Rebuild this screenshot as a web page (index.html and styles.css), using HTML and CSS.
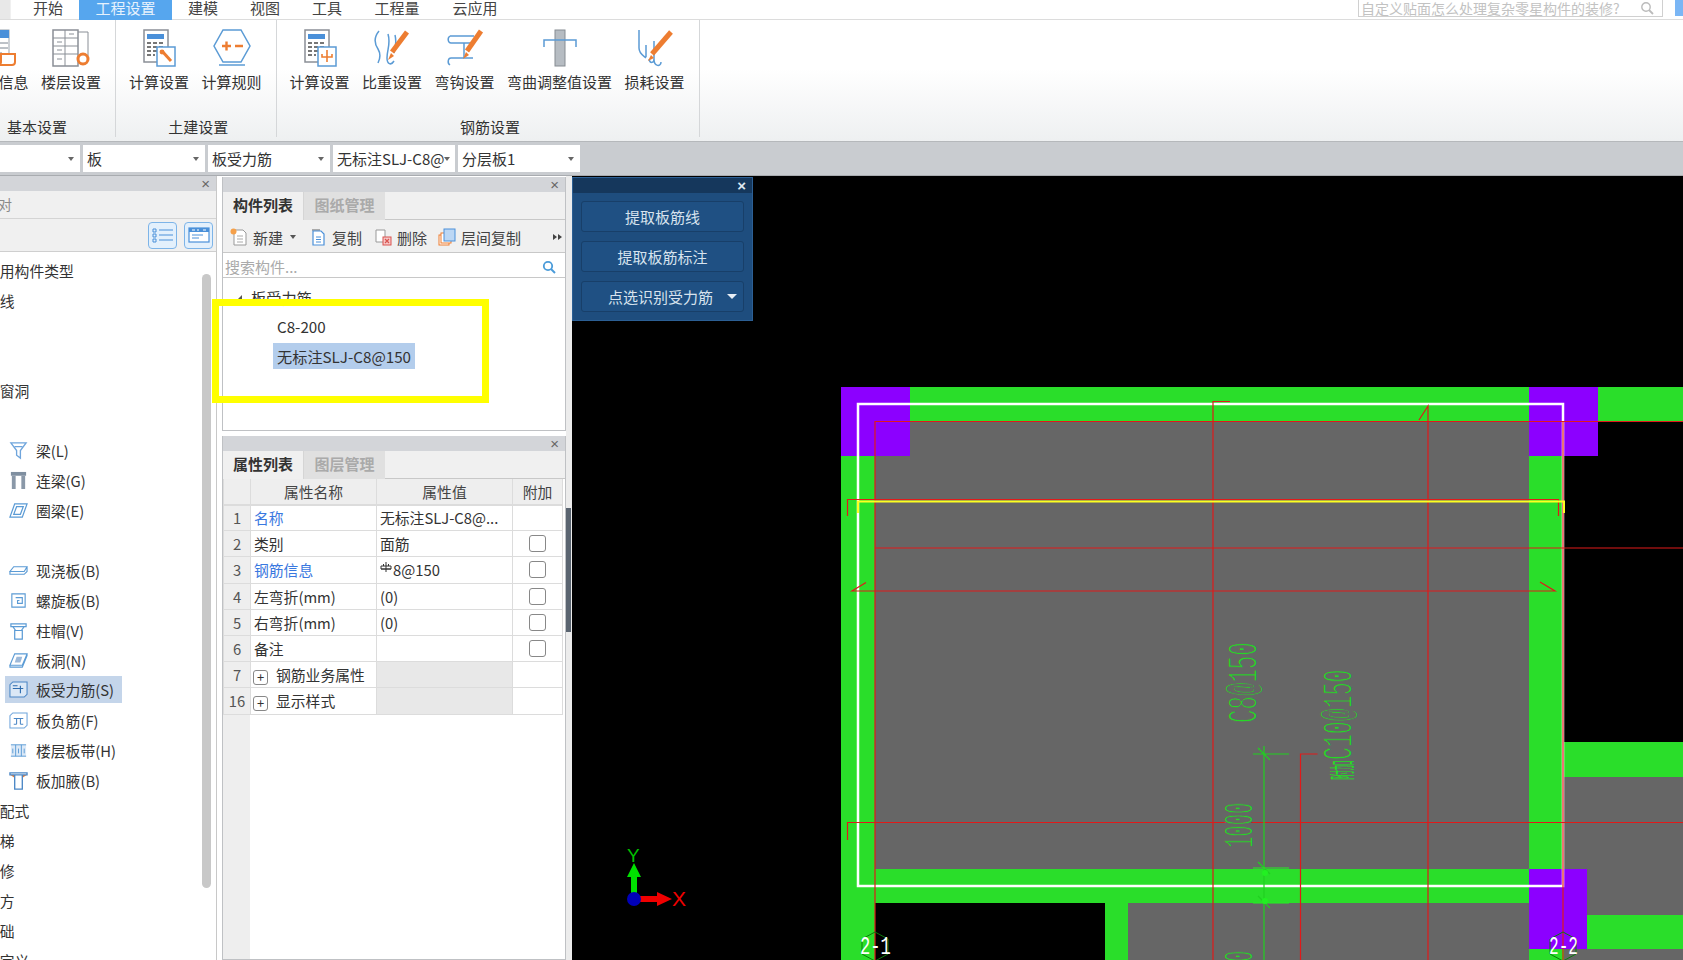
FILE: index.html
```html
<!DOCTYPE html>
<html lang="zh-CN">
<head>
  <meta charset="UTF-8">
  <title>工程设置</title>
  <link rel="stylesheet" href="styles.css">
</head>
<body>
<div class="app">

  <!-- Tabs -->
  <div class="tabbar">
    <div class="app-btn"></div>
    <div class="tab w62">开始</div>
    <div class="tab w93 active">工程设置</div>
    <div class="tab w62">建模</div>
    <div class="tab w62">视图</div>
    <div class="tab w62">工具</div>
    <div class="tab w78">工程量</div>
    <div class="tab w78">云应用</div>
    <div class="top-search">
      <span>自定义贴面怎么处理复杂零星构件的装修?</span>
      <svg class="ico14" viewBox="0 0 14 14"><circle cx="6" cy="6" r="4.2" fill="none" stroke="#bbb" stroke-width="1.4"/><path d="M9 9l4 4" stroke="#bbb" stroke-width="1.8"/></svg>
    </div>
    <div class="top-end"></div>
  </div>

  <!-- Ribbon -->
  <div class="ribbon">
    <div class="rb-group first">
      <div class="rb-items">
        <div class="rb-item">
          <svg class="rb-icon" viewBox="0 0 38 38"><rect x="4" y="1" width="26" height="33" fill="#fff" stroke="#9aa3ad"/><rect x="4" y="1" width="26" height="8" fill="#4a90d9"/><path d="M9 14h20M9 19h20M9 24h14" stroke="#7a8490"/><path d="M22 25h14v8a3 3 0 0 1-3 3H20a3 3 0 0 0 2-3z" fill="#fff" stroke="#ed7d31" stroke-width="2"/></svg>
          <span>工程信息</span>
        </div>
        <div class="rb-item">
          <svg class="rb-icon" viewBox="0 0 38 38"><rect x="1" y="1" width="25" height="36" fill="#fff" stroke="#8a8f96" stroke-width="1.5"/><path d="M1 9h25M1 17h25M1 25h25M13 1v36M26 3h10v24" fill="none" stroke="#8a8f96"/><path d="M17 5h5M5 13h5M5 21h5M5 30h5" stroke="#8a8f96"/><circle cx="31" cy="30" r="5" fill="#fff" stroke="#ed7d31" stroke-width="3"/></svg>
          <span>楼层设置</span>
        </div>
      </div>
      <div class="rb-title">基本设置</div>
    </div>
    <div class="rb-group">
      <div class="rb-items">
        <div class="rb-item">
          <svg class="rb-icon" viewBox="0 0 38 38"><rect x="4" y="1" width="24" height="32" fill="#fff" stroke="#8a8f96" stroke-width="1.5"/><rect x="7" y="5" width="17" height="5" fill="#4a90d9"/><path d="M7 14h17M7 18h17M7 22h10M7 26h8" stroke="#777" stroke-width="2" stroke-dasharray="4 2"/><rect x="17" y="18" width="18" height="19" fill="#fff" stroke="#5b9bd5" stroke-width="1.5"/><path d="M22 22l9 10" stroke="#ed7d31" stroke-width="3"/><circle cx="22" cy="23" r="2.4" fill="#ed7d31"/></svg>
          <span>计算设置</span>
        </div>
        <div class="rb-item">
          <svg class="rb-icon" viewBox="0 0 38 38"><path d="M10 1h18l9 16-9 16H10L1 17z" fill="#fff" stroke="#5b9bd5" stroke-width="1.5"/><path d="M6 36h26" stroke="#5b9bd5" stroke-width="1.5"/><path d="M9 17h9M13.500 12.500v9M22 17h8" stroke="#ed7d31" stroke-width="2.4"/></svg>
          <span>计算规则</span>
        </div>
      </div>
      <div class="rb-title">土建设置</div>
    </div>
    <div class="rb-group">
      <div class="rb-items">
        <div class="rb-item">
          <svg class="rb-icon" viewBox="0 0 38 38"><rect x="4" y="1" width="24" height="32" fill="#fff" stroke="#8a8f96" stroke-width="1.5"/><rect x="7" y="5" width="17" height="5" fill="#4a90d9"/><path d="M7 14h17M7 18h17M7 22h10M7 26h8" stroke="#777" stroke-width="2" stroke-dasharray="4 2"/><rect x="17" y="18" width="18" height="19" fill="#fff" stroke="#5b9bd5" stroke-width="1.5"/><path d="M26 21v12M21 25v3h10v-3" fill="none" stroke="#ed7d31" stroke-width="1.6"/></svg>
          <span>计算设置</span>
        </div>
        <div class="rb-item">
          <svg class="rb-icon" viewBox="0 0 38 38"><path d="M6 2C1 8 1 14 5 20c3 5 2 10 0 14M15 5c3 10-1 15-1 24 0 6 4 8 7 3M22 6c2 8 0 14-1 18" fill="none" stroke="#5b9bd5" stroke-width="1.5"/><path d="M34 3l-15 20" stroke="#ed7d31" stroke-width="5"/><path d="M18 24l-3 7 6-4z" fill="#ed7d31"/></svg>
          <span>比重设置</span>
        </div>
        <div class="rb-item">
          <svg class="rb-icon" viewBox="0 0 38 38"><path d="M4 7c-3 2-2 7 1 7h22M4 36c-3-2-2-7 1-7h22M4 7h8M18 14v15M13 14h10M13 29h10M4 7h24" fill="none" stroke="#5b9bd5" stroke-width="1.5"/><path d="M35 2l-14 20" stroke="#ed7d31" stroke-width="5"/><path d="M20 23l-3 7 6-4z" fill="#ed7d31"/></svg>
          <span>弯钩设置</span>
        </div>
        <div class="rb-item">
          <svg class="rb-icon" viewBox="0 0 38 38"><rect x="14" y="1" width="10" height="36" fill="#b6bcc2" stroke="#868c92"/><path d="M3 18v-7h32v7" fill="none" stroke="#5b9bd5" stroke-width="1.5"/></svg>
          <span>弯曲调整值设置</span>
        </div>
        <div class="rb-item">
          <svg class="rb-icon" viewBox="0 0 38 38"><path d="M3 1v18c0 6 5 8 7 10M10 16v12M18 12v18c0 8 7 8 7 3M13 30c1 5 5 4 5 0" fill="none" stroke="#5b9bd5" stroke-width="1.5"/><path d="M35 3L16 25" stroke="#ed7d31" stroke-width="5"/><path d="M15 26l-3 6 6-3z" fill="#ed7d31"/></svg>
          <span>损耗设置</span>
        </div>
      </div>
      <div class="rb-title">钢筋设置</div>
    </div>
  </div>

  <!-- Combo boxes -->
  <div class="selectbar">
    <div class="combo c0"><span></span><i></i></div>
    <div class="combo c1"><span>板</span><i></i></div>
    <div class="combo c1"><span>板受力筋</span><i></i></div>
    <div class="combo c1"><span>无标注SLJ-C8@</span><i></i></div>
    <div class="combo c1"><span>分层板1</span><i></i></div>
  </div>

  <div class="workspace">

    <!-- Left navigation -->
    <div class="nav-panel">
      <div class="pane-head"><span class="close">×</span></div>
      <div class="nav-title">对</div>
      <div class="nav-tools">
        <div class="view-btn"><svg viewBox="0 0 22 16"><path d="M1 2h3v3H1zM1 7h3v3H1zM1 12h3v3H1z" fill="none" stroke="#4a90d9"/><path d="M7 3h14M7 8h14M7 13h14" stroke="#4a90d9"/></svg></div>
        <div class="view-btn"><svg viewBox="0 0 22 16"><rect x="1" y="1" width="20" height="14" fill="#fff" stroke="#4a90d9" stroke-width="1.2"/><rect x="1" y="1" width="20" height="4" fill="#4a90d9"/><path d="M4 3h3M9 3h2M15 3h3" stroke="#fff"/><path d="M4 8h11M4 11h7" stroke="#4a90d9"/></svg></div>
      </div>
      <div class="nav-list">
        <div class="nav-group">常用构件类型</div>
        <div class="nav-group">轴线</div>
        <div class="nav-group"></div>
        <div class="nav-group"></div>
        <div class="nav-group">门窗洞</div>
        <div class="nav-group"></div>
        <div class="nav-item">
          <svg viewBox="0 0 20 20"><path d="M2 2h16l-6 8v8l-4-3v-5zM6 6h8" fill="none" stroke="#6fa5dc" stroke-width="1.4"/></svg>
          <span>梁(L)</span>
        </div>
        <div class="nav-item">
          <svg viewBox="0 0 20 20"><path d="M2 1h16v4H2z" fill="#7f8fa0"/><path d="M3 5h4v14H3zM13 5h4v14h-4z" fill="#8a98a8"/></svg>
          <span>连梁(G)</span>
        </div>
        <div class="nav-item">
          <svg viewBox="0 0 20 20"><path d="M6 3h13l-5 14H1zM8 6h7l-3 8H5z" fill="none" stroke="#5b9bd5" stroke-width="1.3"/></svg>
          <span>圈梁(E)</span>
        </div>
        <div class="nav-item"></div>
        <div class="nav-item">
          <svg viewBox="0 0 20 20"><path d="M5 6h14l-3 5H1zM1 11v3h15l3-3V6" fill="none" stroke="#5b9bd5" stroke-width="1.2"/></svg>
          <span>现浇板(B)</span>
        </div>
        <div class="nav-item">
          <svg viewBox="0 0 20 20"><path d="M3 3h14v14H3zM7 7h7v6H9v-3h2" fill="none" stroke="#5b9bd5" stroke-width="1.2"/></svg>
          <span>螺旋板(B)</span>
        </div>
        <div class="nav-item">
          <svg viewBox="0 0 20 20"><path d="M2 3h16v3H2zM4 6l3 4h6l3-4M6 10h8v9H6z" fill="none" stroke="#5b9bd5" stroke-width="1.3"/></svg>
          <span>柱帽(V)</span>
        </div>
        <div class="nav-item">
          <svg viewBox="0 0 20 20"><path d="M6 3h13l-5 12H1zM1 15v2h13l5-12V3" fill="none" stroke="#5b9bd5" stroke-width="1.2"/><path d="M8 6h6l-2 6H6z" fill="#9db9d9"/></svg>
          <span>板洞(N)</span>
        </div>
        <div class="nav-item selected">
          <svg viewBox="0 0 20 20"><path d="M4 2h15v13l-3 3H1V5z" fill="#dbe8f6" stroke="#4a86c5" stroke-width="1.1"/><path d="M4 9h11M12 6v8M4 6h5" stroke="#2f6cae" stroke-width="1.2"/></svg>
          <span>板受力筋(S)</span>
        </div>
        <div class="nav-item">
          <svg viewBox="0 0 20 20"><path d="M4 2h15v13l-3 3H1V5z" fill="#fff" stroke="#6fa5dc" stroke-width="1.1"/><path d="M5 8h10M8 8v6M12 8v6M5 14h3M12 14h3" stroke="#4a86c5" stroke-width="1.1"/></svg>
          <span>板负筋(F)</span>
        </div>
        <div class="nav-item">
          <svg viewBox="0 0 20 20"><path d="M2 4h16v12H2z" fill="#dce9f7"/><path d="M2 4h16M2 16h16M7 4v12M13 4v12M4 8v5M10 8v5M16 8v5" stroke="#5b9bd5"/></svg>
          <span>楼层板带(H)</span>
        </div>
        <div class="nav-item">
          <svg viewBox="0 0 20 20"><path d="M1 4h18l-6 4H7z" fill="#ed7d31"/><path d="M1 2h18v2H1zM6 4h8v15H6z" fill="#fff" stroke="#4a86c5" stroke-width="1.4"/></svg>
          <span>板加腋(B)</span>
        </div>
        <div class="nav-group">装配式</div>
        <div class="nav-group">楼梯</div>
        <div class="nav-group">装修</div>
        <div class="nav-group">土方</div>
        <div class="nav-group">基础</div>
        <div class="nav-group">自定义</div>
      </div>
      <div class="nav-scroll"></div>
    </div>

    <!-- Component list and properties -->
    <div class="mid-col">
      <div class="pane list-pane">
        <div class="pane-head"><span class="close">×</span></div>
        <div class="pane-tabs">
          <div class="pane-tab on">构件列表</div>
          <div class="pane-tab">图纸管理</div>
        </div>
        <div class="list-tools">
          <div class="tool t-new">
            <svg viewBox="0 0 18 18"><path d="M4 2h9l3 3v12H4z" fill="#fff" stroke="#999"/><path d="M7 8h6M7 11h6M7 14h6" stroke="#aaa"/><circle cx="3.500" cy="3.500" r="3" fill="#f5a04a"/></svg>
            <span>新建</span><i class="caret"></i>
          </div>
          <div class="tool t-copy">
            <svg viewBox="0 0 18 18"><path d="M3 1h8v2H3z" fill="#aaa"/><path d="M4 3h8l3 3v11H4z" fill="#fff" stroke="#4a90d9" stroke-width="1.2"/><path d="M7 9h5M7 11.500h5M7 14h5" stroke="#4a90d9"/></svg>
            <span>复制</span>
          </div>
          <div class="tool t-del">
            <svg viewBox="0 0 18 18"><path d="M2 2h9v12H2z" fill="#fff" stroke="#999"/><rect x="9" y="9" width="8" height="8" fill="#f7c9c9" stroke="#d9534f"/><path d="M11 11l4 4M15 11l-4 4" stroke="#d9534f" stroke-width="1.2"/></svg>
            <span>删除</span>
          </div>
          <div class="tool t-floor">
            <svg viewBox="0 0 18 18"><rect x="1" y="7" width="10" height="10" fill="#fff" stroke="#ed7d31"/><rect x="3" y="5" width="10" height="10" fill="#fff" stroke="#ed7d31"/><rect x="6" y="1" width="11" height="12" fill="#bcd7f4" stroke="#4a90d9"/></svg>
            <span>层间复制</span>
          </div>
          <div class="more">
            <svg viewBox="0 0 10 10"><path d="M1 2l4 3-4 3zM6 2l4 3-4 3z" fill="#444"/></svg>
          </div>
        </div>
        <div class="list-search">
          <span>搜索构件...</span>
          <svg class="ico14" viewBox="0 0 14 14"><circle cx="6" cy="6" r="4.200" fill="none" stroke="#4a9bd9" stroke-width="1.800"/><path d="M9 9l4 4" stroke="#4a9bd9" stroke-width="2"/></svg>
        </div>
        <div class="tree">
          <div class="tree-row root"><i class="tri"></i>板受力筋</div>
          <div class="tree-row leaf"><span>C8-200</span></div>
          <div class="tree-row leaf"><span class="sel">无标注SLJ-C8@150</span></div>
        </div>
      </div>

      <div class="pane prop-pane">
        <div class="pane-head"><span class="close">×</span></div>
        <div class="pane-tabs">
          <div class="pane-tab on">属性列表</div>
          <div class="pane-tab">图层管理</div>
        </div>
        <div class="prop-body">
          <table class="prop-table">
            <tr class="prop-head"><th class="num"></th><th class="name">属性名称</th><th class="val">属性值</th><th class="add">附加</th></tr>
            <tr><td class="num">1</td><td class="link">名称</td><td>无标注SLJ-C8@...</td><td></td></tr>
            <tr><td class="num">2</td><td>类别</td><td>面筋</td><td class="chk"><b></b></td></tr>
            <tr><td class="num">3</td><td class="link">钢筋信息</td><td><svg class="rebar" viewBox="0 0 12 12"><path d="M1 8h10M1 5h10v3H1zM6 1v10M3.500 3v2M8.500 3v2" fill="none" stroke="#333"/></svg>8@150</td><td class="chk"><b></b></td></tr>
            <tr><td class="num">4</td><td>左弯折(mm)</td><td>(0)</td><td class="chk"><b></b></td></tr>
            <tr><td class="num">5</td><td>右弯折(mm)</td><td>(0)</td><td class="chk"><b></b></td></tr>
            <tr><td class="num">6</td><td>备注</td><td></td><td class="chk"><b></b></td></tr>
            <tr><td class="num">7</td><td class="grp"><em>+</em>钢筋业务属性</td><td class="shade"></td><td></td></tr>
            <tr><td class="num">16</td><td class="grp"><em>+</em>显示样式</td><td class="shade"></td><td></td></tr>
          </table>
        </div>
      </div>
    </div>

    <div class="splitter"><div class="split-bar"></div></div>

    <!-- Drawing canvas -->
    <div class="canvas">
      <svg class="cad" viewBox="572 177 1111 783" width="1111" height="783">
        <!-- slabs -->
        <g fill="#666">
          <rect x="875" y="421" width="654" height="448"/>
          <rect x="1564" y="777" width="119" height="183"/>
          <rect x="1128" y="903" width="401" height="57"/>
        </g>
        <!-- beams -->
        <g fill="#2ade2a">
          <rect x="841" y="387" width="688" height="34"/>
          <rect x="1598" y="387" width="85" height="34"/>
          <rect x="841" y="387" width="34" height="573"/>
          <rect x="1529" y="456" width="35" height="413"/>
          <rect x="1564" y="742" width="119" height="35"/>
          <rect x="875" y="869" width="654" height="34"/>
          <rect x="1105" y="903" width="23" height="57"/>
          <rect x="1587" y="915" width="96" height="34"/>
          <rect x="1529" y="949" width="35" height="11"/>
        </g>
        <!-- columns -->
        <g fill="#8c00ff">
          <rect x="841" y="387" width="69" height="69"/>
          <rect x="1529" y="387" width="69" height="69"/>
          <rect x="1529" y="869" width="58" height="80"/>
        </g>
        <!-- selected slab outline -->
        <rect x="858" y="404" width="705" height="482" fill="none" stroke="#fff" stroke-width="2.500"/>
        <!-- rebar lines -->
        <g fill="none" stroke="#e01a1a" stroke-width="1.200">
          <path d="M875 960V421.500H1683"/>
          <path d="M1230 401.500h-17V960"/>
          <path d="M1419 420l9-14V960"/>
          <path d="M1563 421.500V960"/>
          <path d="M847.500 516v-16.500h711V516"/>
          <path d="M875 548h808"/>
          <path d="M866 582.500l-14 8.500h703l-15-9"/>
          <path d="M847.500 840v-17.500H1683"/>
          <path d="M1317.500 754h-17V960"/>
        </g>
        <path d="M858 513v-11.500h706V513" fill="none" stroke="#ffff20" stroke-width="2"/>
        <!-- dimension -->
        <g stroke="#20d020" stroke-width="1.200" fill="none">
          <path d="M1264 746V960"/>
          <path d="M1253 754h36M1258 748l12 12"/>
          <path d="M1258 862l12 12M1258 896l12 12"/>
        </g>
        <path d="M1253 868h36M1253 903h36" stroke="#22f022" fill="none"/>
        <circle cx="1265" cy="873" r="3" fill="#22f022"/>
        <circle cx="1265" cy="901" r="3" fill="#22f022"/>
        <g class="cad-text">
          <text transform="translate(1257 723) rotate(-90) scale(.51 1)">C8@150</text>
          <text transform="translate(1352 760) rotate(-90) scale(.49 1)">C10@150</text>
          <text transform="translate(1253 848) rotate(-90) scale(.43 1)">1000</text>
          <text transform="translate(1253 996) rotate(-90) scale(.43 1)">1000</text>
        </g>
        <text class="cad-small" transform="translate(1352 780) rotate(-90) scale(.38 1)">附加</text>
        <!-- axis marks -->
        <path d="M875 932l13 7v15l-13 7-13-7v-15z" fill="none" stroke="#0b7a0b"/>
        <path d="M1563 932l13 7v15l-13 7-13-7v-15z" fill="none" stroke="#0b7a0b"/>
        <text class="axis-no" transform="translate(860 954) scale(.66 1)">2-1</text>
        <text class="axis-no" transform="translate(1549 954) scale(.62 1)">2-2</text>
        <!-- coordinate gizmo -->
        <path d="M631 899v-22h-4l7-14 7 14h-4v22z" fill="#00e000"/>
        <path d="M634 896h23v-4l15 7-15 7v-4h-23z" fill="#f00000"/>
        <circle cx="634" cy="899" r="7" fill="#0000b8"/>
        <text class="gizmo-y" x="627" y="862">Y</text>
        <text class="gizmo-x" x="672" y="906">X</text>
      </svg>

      <div class="float-panel">
        <div class="float-head"><span>×</span></div>
        <div class="float-btn">提取板筋线</div>
        <div class="float-btn">提取板筋标注</div>
        <div class="float-btn split"><span>点选识别受力筋</span><i></i></div>
      </div>
    </div>

    <!-- Yellow note frame drawn over the list -->
    <div class="note-frame"></div>
  </div>
</div>
</body>
</html>
```

FILE: styles.css
```css
* {
  margin: 0;
  padding: 0;
  box-sizing: border-box;
}

html {
  height: 960px;
  overflow: hidden;
}

body {
  font-family: "Noto Sans CJK SC", "Liberation Sans", sans-serif;
  font-size: 14px;
  color: #333;
  background: #fff;
  overflow: hidden;
}

.app {
  width: 1683px;
  height: 960px;
  display: flex;
  flex-direction: column;
  overflow: hidden;
}

/* Tabs */
.tabbar {
  height: 20px;
  flex: none;
  display: flex;
  background: #fff;
  border-bottom: 1px solid #dcdcdc;
}

.app-btn {
  width: 17px;
  background: linear-gradient(to right, #e8e8e8 60%, #fff 65%);
}

.tab {
  text-align: center;
  font-size: 15px;
  line-height: 16px;
  color: #444;
}

.w62 { width: 62px; }
.w78 { width: 78px; }
.w93 { width: 93px; }

.tab.active {
  background: #56a6ee;
  color: #e6f2fd;
  height: 20px;
}

.top-search {
  margin-left: auto;
  width: 305px;
  height: 17px;
  border: 1px solid #d0d0d0;
  border-top: none;
  display: flex;
  align-items: center;
  justify-content: space-between;
  padding: 0 8px 0 2px;
  font-size: 14px;
  color: #c2c2c2;
  white-space: nowrap;
}

.top-end {
  width: 8px;
  height: 16px;
  margin-left: 12px;
  background: #7ab6f5;
}

.ico14 {
  width: 14px;
  height: 14px;
  flex: none;
}

/* Ribbon */
.ribbon {
  height: 122px;
  flex: none;
  display: flex;
  background: linear-gradient(to bottom, #fff 40%, #eef0f1 100%);
  border-bottom: 1px solid #b5b8bb;
}

.rb-group {
  display: flex;
  flex-direction: column;
  border-right: 1px solid #d5d7d9;
  padding: 9px 14px 0 13px;
  margin-bottom: 4px;
}

.rb-group.first {
  width: 116px;
  padding-left: 0;
  overflow: hidden;
  align-items: flex-end;
}

.rb-items {
  display: flex;
  gap: 12.500px;
  flex: 1;
}

.rb-item {
  display: flex;
  flex-direction: column;
  align-items: center;
  font-size: 15px;
  line-height: 20px;
  white-space: nowrap;
}

.rb-icon {
  width: 38px;
  height: 38px;
  margin-bottom: 5px;
}

.rb-title {
  align-self: center;
  font-size: 15px;
  line-height: 20px;
  margin-left: 6px;
}

.rb-group.first .rb-title {
  align-self: flex-start;
  margin-left: 7px;
}

/* Combo boxes */
.selectbar {
  height: 34px;
  flex: none;
  display: flex;
  gap: 3px;
  padding-top: 3px;
  background: #c9ccd0;
  border-bottom: 1px solid #a9acb0;
}

.combo {
  height: 27px;
  background: #fff;
  display: flex;
  align-items: center;
  justify-content: space-between;
  padding: 0 6px 0 4px;
  font-size: 15px;
  white-space: nowrap;
  overflow: hidden;
}

.combo.c0 { width: 80px; }
.combo.c1 { width: 122px; }

.combo i {
  border: 3.500px solid transparent;
  border-top: 4px solid #666;
  border-bottom: 0;
  flex: none;
}

/* Workspace */
.workspace {
  position: relative;
  flex: 1;
  display: flex;
  min-height: 0;
  background: #fff;
}

.pane-head {
  height: 15px;
  background: #d3d5d9;
  display: flex;
  justify-content: flex-end;
  align-items: center;
  padding-right: 6px;
}

.close {
  font-family: "Liberation Sans", sans-serif;
  font-size: 15px;
  line-height: 15px;
  color: #666;
}

/* Left navigation */
.nav-panel {
  position: relative;
  width: 217px;
  flex: none;
  border-right: 1px solid #c8c8c8;
  overflow: hidden;
}

.nav-title {
  height: 28px;
  line-height: 27px;
  text-indent: -2px;
  font-size: 14px;
  color: #8a8a8a;
  background: #f0f0f0;
  border-bottom: 1px solid #d4d4d4;
}

.nav-tools {
  height: 33px;
  display: flex;
  justify-content: flex-end;
  align-items: center;
  gap: 7px;
  padding-right: 3px;
  background: #f0f0f0;
  border-bottom: 1px solid #cfcfcf;
}

.view-btn {
  width: 29px;
  height: 27px;
  display: flex;
  align-items: center;
  justify-content: center;
  background: #e3f0fc;
  border: 1px solid #7db4e8;
  border-radius: 4px;
}

.view-btn svg {
  width: 22px;
  height: 16px;
}

.nav-list {
  padding-top: 3px;
}

.nav-group {
  height: 30px;
  line-height: 32px;
  margin-left: -15px;
  font-size: 14.800px;
  white-space: nowrap;
}

.nav-item {
  width: 117px;
  height: 30px;
  margin-left: 5px;
  padding-left: 4px;
  display: flex;
  align-items: center;
  gap: 8px;
  font-size: 14.800px;
  white-space: nowrap;
}

.nav-item svg {
  width: 19px;
  height: 19px;
  flex: none;
}

.nav-item.selected {
  background: #c4d5ea;
  height: 27px;
  margin: 1px 0 2px 5px;
}

.nav-scroll {
  position: absolute;
  left: 202px;
  top: 98px;
  width: 9px;
  height: 614px;
  background: #c8c8c8;
  border-radius: 5px;
}

/* Middle column */
.mid-col {
  width: 344px;
  flex: none;
  margin-left: 5px;
  display: flex;
  flex-direction: column;
  gap: 5px;
}

.pane {
  border: 1px solid #bfc1c4;
  border-top: none;
  background: #fff;
  overflow: hidden;
}

.list-pane {
  height: 254px;
  flex: none;
  margin-top: 1px;
}

.prop-pane {
  flex: 1;
  display: flex;
  flex-direction: column;
}

.pane-tabs {
  height: 28px;
  display: flex;
  background: #f0f0f0;
  border-bottom: 1px solid #c8c8c8;
}

.pane-tab {
  width: 81px;
  height: 28px;
  line-height: 25px;
  text-align: center;
  font-size: 15px;
  font-weight: 700;
  color: #aaa;
  background: #e0e0e0;
}

.pane-tab.on {
  color: #333;
  background: #f0f0f0;
  border-right: 1px solid #d5d5d5;
}

.list-tools {
  height: 33px;
  padding-top: 2px;
  display: flex;
  align-items: center;
  background: #f0f0f0;
  border-bottom: 1px solid #c8c8c8;
  font-size: 15px;
  color: #444;
}

.tool {
  display: flex;
  align-items: center;
  gap: 5px;
  white-space: nowrap;
}

.tool svg {
  width: 18px;
  height: 18px;
  flex: none;
}

.t-new { margin-left: 7px; }
.t-copy { margin-left: 13px; }
.t-del { margin-left: 12px; }
.t-floor { margin-left: 11px; }

.caret {
  border: 3.500px solid transparent;
  border-top: 4px solid #555;
  border-bottom: 0;
  margin-left: 2px;
}

.more {
  margin-left: auto;
  margin-right: 3px;
  display: flex;
}

.more svg {
  width: 10px;
  height: 10px;
}

.list-search {
  height: 25px;
  padding: 3px 9px 0 2px;
  display: flex;
  align-items: center;
  justify-content: space-between;
  border-bottom: 1px solid #c8c8c8;
  font-size: 15px;
  color: #aaa;
}

.tree {
  font-size: 15.200px;
  color: #333;
  padding-top: 3px;
}

.tree-row {
  height: 30px;
  line-height: 30px;
  white-space: nowrap;
}

.tree-row.root {
  padding: 2px 0 0 14px;
  display: flex;
  align-items: center;
  gap: 9px;
}

.tri {
  border-left: 5px solid transparent;
  border-bottom: 5px solid #555;
}

.tree-row.leaf {
  padding-left: 54px;
}

.tree-row.leaf .sel {
  display: inline-block;
  height: 26px;
  line-height: 26px;
  margin-left: -4px;
  padding: 0 4px;
  background: #b3cdec;
}

/* Properties table */
.prop-body {
  flex: 1;
  background: linear-gradient(to right, #eee 27px, #fff 27px);
}

.prop-table {
  width: 340px;
  table-layout: fixed;
  border-collapse: collapse;
  font-size: 14.800px;
}

.prop-table th,
.prop-table td {
  height: 26.200px;
  border: 1px solid #dcdcdc;
  border-top-width: 0;
  font-weight: 400;
  padding: 0 3px;
  white-space: nowrap;
  overflow: hidden;
  background: #fff;
}

.prop-table th {
  height: 25.500px;
  background: #eee;
  text-align: center;
  color: #444;
  border-bottom: 2px solid #dcdcdc;
}

.prop-table th.num { width: 27px; }
.prop-table th.name { width: 126px; }
.prop-table th.val { width: 136px; }

.prop-table td.num {
  background: #eee;
  text-align: center;
  color: #555;
  padding: 0;
}

.prop-table td.link {
  color: #3a78e0;
}

.prop-table td.shade {
  background: #e8e8e8;
}

.prop-table td.chk {
  text-align: center;
  line-height: 0;
}

.chk b {
  display: inline-block;
  width: 17px;
  height: 17px;
  border: 1px solid #888;
  border-radius: 3px;
}

.grp em {
  display: inline-block;
  width: 15px;
  height: 15px;
  margin: 0 8px 0 -1px;
  border: 1px solid #888;
  border-radius: 3px;
  font-style: normal;
  font-size: 13px;
  line-height: 12px;
  text-align: center;
  vertical-align: -1px;
}

.rebar {
  width: 12px;
  height: 12px;
  vertical-align: 3px;
  margin-right: 1px;
}

/* Splitter */
.splitter {
  width: 6px;
  flex: none;
  padding-top: 332px;
  background: #ececec;
}

.split-bar {
  width: 5px;
  height: 124px;
  background: #5a6470;
}

/* Canvas */
.canvas {
  position: relative;
  flex: 1;
  background: #000;
  overflow: hidden;
}

.cad {
  display: block;
  position: absolute;
  left: 0;
  top: 1px;
}

/* gray stroke over the fill thins the letters down to CAD line weight */
.cad-text text {
  font-family: "Liberation Mono", monospace;
  font-size: 44px;
  fill: #26d826;
  stroke: #666;
  stroke-width: 1.200px;
  vector-effect: non-scaling-stroke;
}

.cad-small {
  font-size: 26px;
  fill: #22e022;
}

.axis-no {
  font-family: "Liberation Mono", monospace;
  font-size: 26px;
  fill: #fff;
}

.gizmo-y {
  font-family: "Liberation Sans", sans-serif;
  font-size: 19px;
  fill: #00c000;
}

.gizmo-x {
  font-family: "Liberation Sans", sans-serif;
  font-size: 21px;
  fill: #f00000;
}

/* Floating panel */
.float-panel {
  position: absolute;
  left: 0;
  top: 1px;
  width: 181px;
  height: 144px;
  background: #1e4d7e;
  border: 1px solid #2c5f94;
  padding: 0 8px;
  display: flex;
  flex-direction: column;
  gap: 9px;
}

.float-head {
  height: 15px;
  margin: 0 -8px -1px;
  padding-right: 6px;
  background: #15375c;
  color: #dfe8f1;
  text-align: right;
  font-family: "Liberation Sans", sans-serif;
  font-size: 15px;
  font-weight: 700;
  line-height: 15px;
}

.float-btn {
  height: 31px;
  line-height: 30px;
  background: #1f5083;
  border: 1px solid #183f69;
  border-radius: 3px;
  color: #d7e3ee;
  font-size: 15px;
  text-align: center;
}

.float-btn.split {
  display: flex;
  align-items: center;
  justify-content: space-between;
  padding: 0 6px 0 26px;
}

.float-btn.split i {
  border: 5px solid transparent;
  border-top: 5px solid #e8eef5;
  border-bottom: 0;
}

/* Note frame */
.note-frame {
  position: absolute;
  left: 212px;
  top: 123px;
  width: 277px;
  height: 104px;
  border: 7px solid #ffff00;
}
```
